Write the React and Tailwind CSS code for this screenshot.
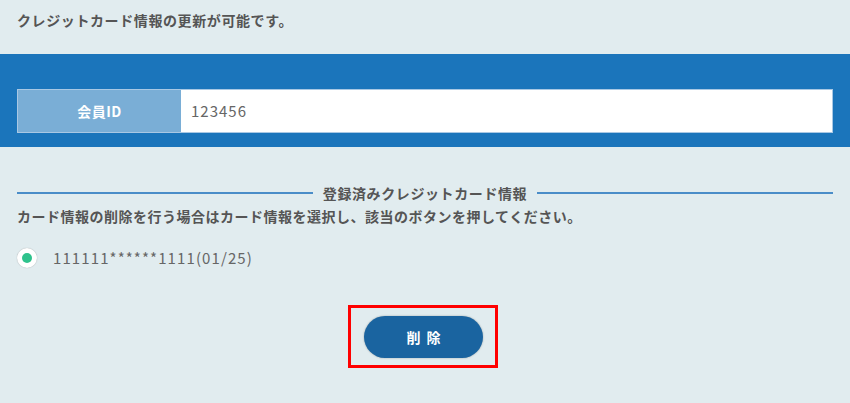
export default function App() {
    return (
        <div className="min-h-[403px] w-full bg-[#e1ecef] text-[#555] font-['Noto_Sans_CJK_JP','Noto_Sans',sans-serif]">
            {/* intro */}
            <div className="px-[17px] pt-[9px] h-[54px]">
                <p className="text-[14px] font-bold leading-[22px] tracking-[0.6px]">クレジットカード情報の更新が可能です。</p>
            </div>

            {/* member id band */}
            <div className="bg-[#1b75bb] h-[93px] px-[17px] pt-[35px]">
                <div className="flex h-[44px] border border-[#a9c8e4]">
                    <div className="w-[163px] bg-[#7aaed6] flex items-center justify-center text-white text-[14px] font-bold tracking-[0.5px]">
                        会員ID
                    </div>
                    <div className="flex-1 bg-white flex items-center pl-[10px] text-[15px] text-[#666] tracking-[1px]">
                        123456
                    </div>
                </div>
            </div>

            {/* card list */}
            <div className="px-[17px] pt-[35px]">
                <div className="flex items-center gap-[10px]">
                    <div className="flex-1 h-[2px] bg-[#4a8dc8]"></div>
                    <span className="text-[14px] font-bold leading-[22px] tracking-[0.6px]">登録済みクレジットカード情報</span>
                    <div className="flex-1 h-[2px] bg-[#4a8dc8]"></div>
                </div>
                <p className="text-[14px] font-bold leading-[22px] mt-[1px] tracking-[0.5px]">
                    カード情報の削除を行う場合はカード情報を選択し、該当のボタンを押してください。
                </p>
                <label className="flex items-center mt-[19px] h-[24px]">
                    <span className="w-[20px] h-[20px] rounded-full bg-white shadow-[0_0_1px_rgba(0,0,0,0.35)] flex items-center justify-center">
                        <span className="w-[10px] h-[10px] rounded-full bg-[#2ec28c]"></span>
                    </span>
                    <span className="ml-[16px] text-[15px] text-[#666] tracking-[1.1px]">111111******1111(01/25)</span>
                </label>

                <div className="flex justify-center mt-[35px] pr-[4px]">
                    <div className="w-[150px] h-[63px] border-[3px] border-[#ff0000] flex items-center justify-center pl-[1px] pt-[1px]">
                        <button className="w-[119px] h-[42px] rounded-full bg-[#1a64a0] text-white text-[14px] font-bold tracking-[6px] pl-[6px] shadow-[0_0_2px_rgba(0,0,0,0.3)]">
                            削除
                        </button>
                    </div>
                </div>
            </div>
        </div>
    );
}
